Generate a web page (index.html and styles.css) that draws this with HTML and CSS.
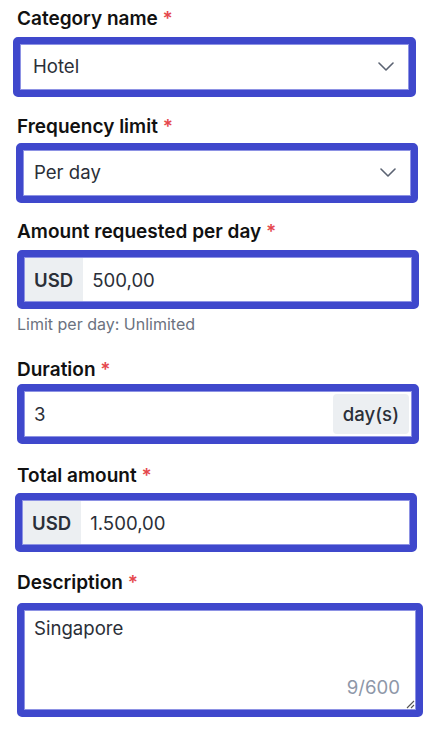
FILE: index.html
```html
<!DOCTYPE html>
<html>
<head>
<meta charset="utf-8">
<link rel="stylesheet" href="styles.css">
</head>
<body>
<form class="form">
  <div class="field f1">
    <label class="label">Category name <span class="req">*</span></label>
    <div class="box select">
      <span class="value">Hotel</span>
      <svg class="chev" width="16" height="9" viewBox="0 0 16 9"><path d="M1 1l7 7 7-7" fill="none" stroke="#5b6372" stroke-width="1.6" stroke-linecap="round" stroke-linejoin="round"/></svg>
    </div>
  </div>
  <div class="field f2">
    <label class="label">Frequency limit <span class="req">*</span></label>
    <div class="box select">
      <span class="value">Per day</span>
      <svg class="chev" width="16" height="9" viewBox="0 0 16 9"><path d="M1 1l7 7 7-7" fill="none" stroke="#5b6372" stroke-width="1.6" stroke-linecap="round" stroke-linejoin="round"/></svg>
    </div>
  </div>
  <div class="field f3">
    <label class="label">Amount requested per day <span class="req">*</span></label>
    <div class="box group">
      <span class="addon">USD</span>
      <span class="value amt">500,00</span>
    </div>
    <p class="help">Limit per day: Unlimited</p>
  </div>
  <div class="field f4">
    <label class="label">Duration <span class="req">*</span></label>
    <div class="box group">
      <span class="value grow">3</span>
      <span class="addon right">day(s)</span>
    </div>
  </div>
  <div class="field f5">
    <label class="label">Total amount <span class="req">*</span></label>
    <div class="box group">
      <span class="addon">USD</span>
      <span class="value amt">1.500,00</span>
    </div>
  </div>
  <div class="field f6">
    <label class="label">Description <span class="req">*</span></label>
    <div class="box area">
      <span class="value">Singapore</span>
      <span class="count">9/600</span>
      <svg class="grip" width="9" height="9" viewBox="0 0 9 9"><path d="M8 1L1 8M8 5L5 8" stroke="#555" stroke-width="1.1" fill="none"/></svg>
    </div>
  </div>
</form>
</body>
</html>
```
FILE: styles.css
```css
* { box-sizing: border-box; }
html, body { margin: 0; padding: 0; background: #fff; }
body { font-family: Inter, "Noto Sans", sans-serif; color: #111; }
.form { display: flex; flex-direction: column; padding: 7px 0 0 17px; width: 438px; }
.field { display: flex; flex-direction: column; }
.label { font-size: 19px; font-weight: 600; line-height: 24px; color: #111; display: block; }
.req { color: #e5484d; font-weight: 600; }
.box {
  border: 7px solid #3f48cc;
  border-radius: 5px;
  box-shadow: inset 0 0 0 1px #8d92e4;
  height: 60px;
  width: 402px;
  display: flex;
  align-items: center;
  background: #fff;
  position: relative;
}
.value { font-size: 18.6px; color: #2b2f38; line-height: 24px; }
.select { padding: 0 15px 2px 13px; justify-content: space-between; }
.chev { display: block; }
.group { padding: 1px; }
.addon {
  background: #eceff2;
  font-size: 18.6px;
  font-weight: 600;
  color: #2b2f38;
  height: 100%;
  display: flex;
  align-items: center;
  padding: 0 10px 0 9px;
}
.amt { padding-left: 9px; }
.grow { flex: 1; padding-left: 9px; }
.addon.right { font-weight: 500; border-radius: 4px; height: 40px; padding: 0 10px; margin-right: 2px; }
.help { margin: 5px 0 0; font-size: 16px; line-height: 20px; color: #6b7280; }
.area { height: 114px; width: 406px; align-items: flex-start; padding: 6px 10px; }
.count { position: absolute; right: 16px; bottom: 12px; font-size: 18.6px; color: #8e97a8; }
.grip { position: absolute; right: 1px; bottom: 1px; }

.f1 .box { margin: 6px 0 0 -4px; width: 403px; }
.f2 { margin-top: 18px; }
.f2 .box { margin: 4px 0 0 -1px; padding-left: 11px; }
.f3 { margin-top: 17px; }
.f3 .box { margin-top: 6px; height: 59px; }
.f4 { margin-top: 24px; }
.f4 .box { margin-top: 2px; }
.f5 { margin-top: 20px; }
.f5 .box { margin: 5px 0 0 -2px; height: 59px; }
.f6 { margin-top: 19px; }
.f6 .box { margin-top: 8px; }
```
